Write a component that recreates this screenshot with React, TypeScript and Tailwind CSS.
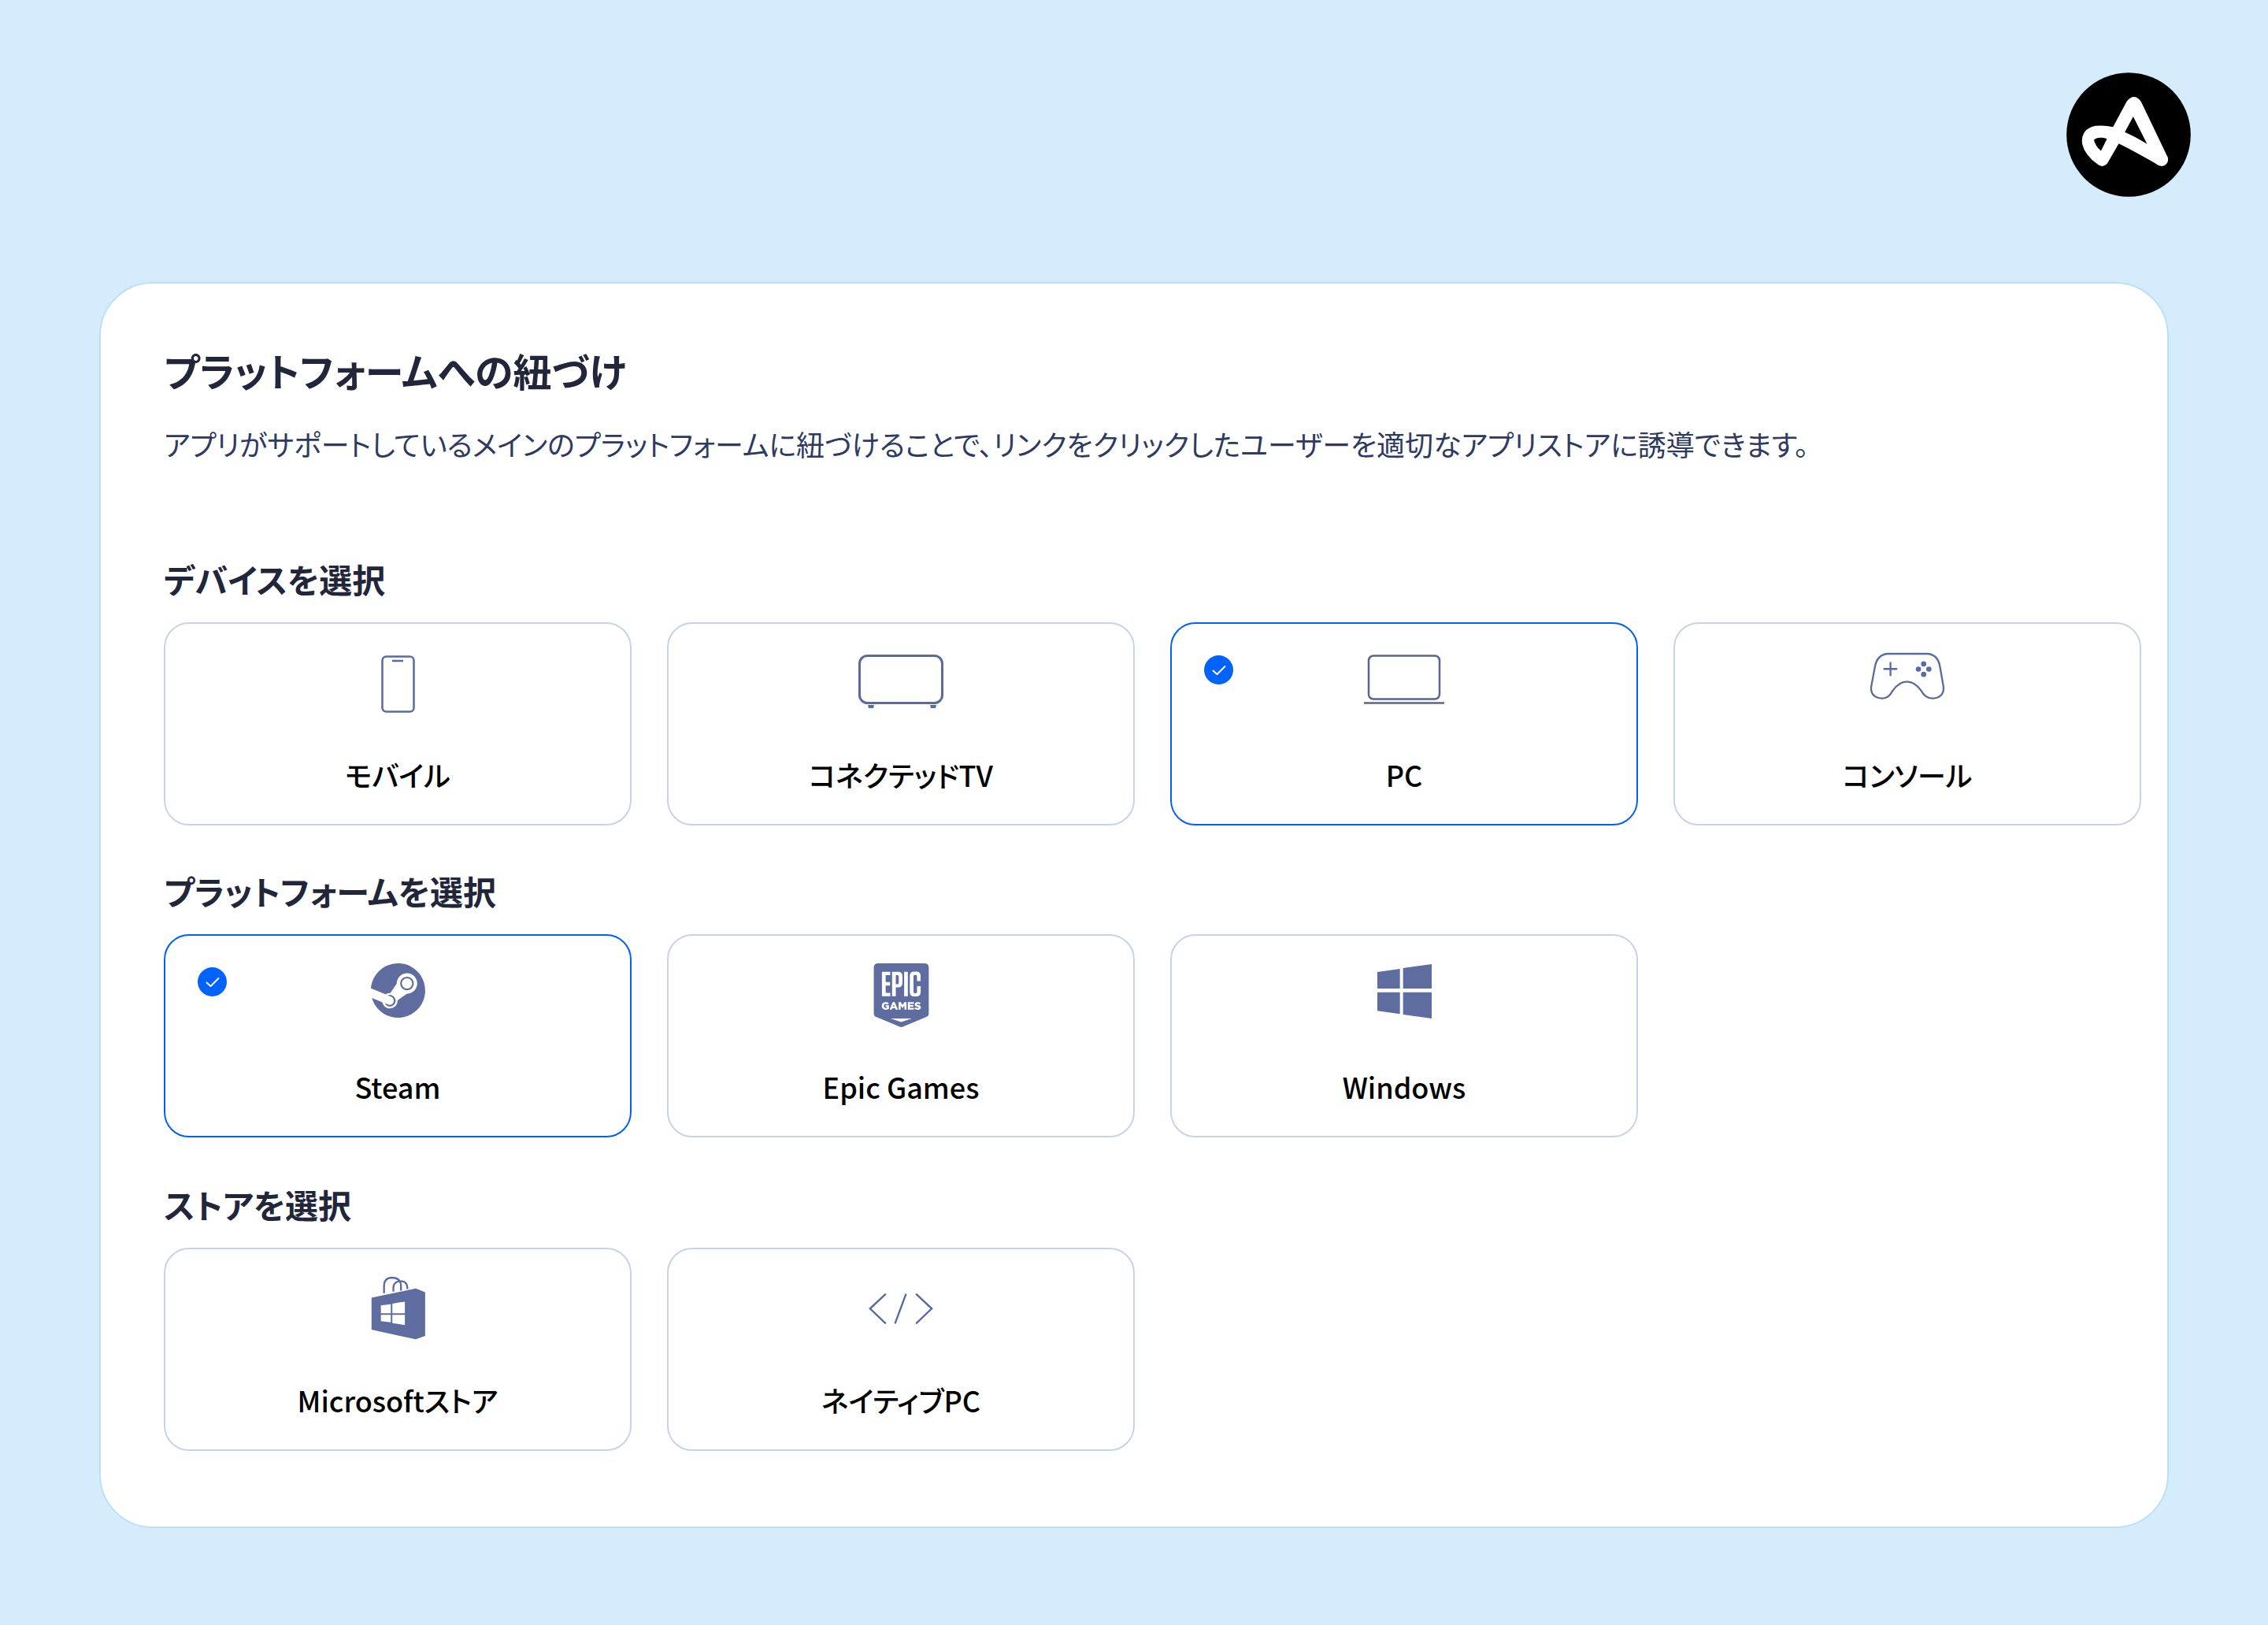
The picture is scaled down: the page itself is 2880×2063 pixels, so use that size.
import { ReactNode } from "react"
import { SiEpicgames, SiSteam } from "react-icons/si"

interface Option {
  label: string
  icon: ReactNode
  selected?: boolean
}

function AdjustLogo() {
  return (
    <svg viewBox="190 95 475 473" className="w-[158px] h-[158px]">
      <circle cx="427.5" cy="331.5" r="237" fill="#000" />
      <path
        fill="#fff"
        fillRule="evenodd"
        d="M420 205Q448 170 475 205L578 420Q582 445 555 452Q540 450 525 438Q450 395 390 365L347 440Q330 460 310 445Q260 410 250 365Q245 310 300 298Q335 294 368 302ZM445 262L498 367Q455 340 413 322ZM295 350Q315 338 345 347L322 393Q300 375 295 350Z"
      />
    </svg>
  )
}

function PhoneIcon() {
  return (
    <svg viewBox="0 0 43 73" className="mt-[40px] w-[43px] h-[73px] text-[#5a6ba3]" fill="none" stroke="currentColor">
      <rect x="1.5" y="1.5" width="40" height="70" rx="5" strokeWidth="2.5" />
      <path d="M14 7H28" strokeWidth="2.5" />
    </svg>
  )
}

function TvIcon() {
  return (
    <svg viewBox="0 0 108 68" className="mt-[39px] w-[108px] h-[68px] text-[#5a6ba3]" fill="none">
      <rect x="1.5" y="1.5" width="105" height="60" rx="10" stroke="currentColor" strokeWidth="3" />
      <path d="M12 64H20L19 68H13ZM91 64H99L98 68H92Z" fill="currentColor" />
    </svg>
  )
}

function LaptopIcon() {
  return (
    <svg viewBox="0 0 102 63" className="mt-[39px] w-[102px] h-[63px] text-[#5a6590]" fill="none" stroke="currentColor">
      <rect x="6" y="1.5" width="90" height="55" rx="6" strokeWidth="2.5" />
      <path d="M0 61.5H102" strokeWidth="2.5" />
    </svg>
  )
}

function GamepadIcon() {
  return (
    <svg viewBox="72 52 289 184" className="mt-[36px] w-[96px] h-[61px] text-[#5a6ba3]" fill="none">
      <path
        d="M140 58H295Q335 62 342 110L355 185Q358 225 315 229Q285 230 270 200Q245 165 215 165Q185 165 160 200Q145 230 120 229Q75 225 78 185L92 110Q100 62 140 58Z"
        stroke="currentColor"
        strokeWidth="7"
      />
      <path d="M125 116H178M152 90V143" stroke="currentColor" strokeWidth="7" />
      <g fill="currentColor">
        <circle cx="279" cy="97" r="10" />
        <circle cx="259" cy="117" r="10" />
        <circle cx="299" cy="117" r="10" />
        <circle cx="279" cy="137" r="10" />
      </g>
    </svg>
  )
}

function WindowsIcon() {
  return (
    <svg viewBox="145 100 207 207" className="mt-[36px] w-[69px] h-[69px]" fill="#5f6c9f">
      <polygon points="145,130 231,118 231,193 145,193" />
      <polygon points="243,115 352,100 352,193 243,193" />
      <polygon points="145,207 231,207 231,290 145,278" />
      <polygon points="243,207 352,207 352,307 243,292" />
    </svg>
  )
}

function StoreIcon() {
  return (
    <svg viewBox="150 62 208 245" className="mt-[34px] w-[69px] h-[81px]">
      <g fill="none" stroke="#5a6ba3" strokeWidth="7">
        <path d="M200 128V100Q200 70 228 68Q262 68 265 95V118" />
        <path d="M236 122V105Q238 85 258 82H270Q290 85 290 112" />
      </g>
      <polygon fill="#5f6c9f" points="152,145 322,110 358,124 358,292 322,305 152,268" />
      <g fill="#fff">
        <polygon points="188,175 226,170 226,205 188,205" />
        <polygon points="232,168 280,160 280,205 232,205" />
        <polygon points="188,211 226,211 226,240 188,235" />
        <polygon points="232,211 280,211 280,250 232,243" />
      </g>
    </svg>
  )
}

function CodeIcon() {
  return (
    <svg viewBox="130 122 245 123" className="mt-[55px] w-[82px] h-[41px] text-[#5469a0]" fill="none" stroke="currentColor" strokeWidth="7">
      <path d="M195 127L135 183L195 240M310 127L370 183L310 240M272 127L230 240" />
    </svg>
  )
}

function CheckBadge() {
  return (
    <div className="absolute left-[41px] top-[40px] w-[37px] h-[37px] rounded-full bg-[#0062ff] flex items-center justify-center">
      <svg viewBox="0 0 24 24" className="w-[24px] h-[24px]" fill="none" stroke="#fff" strokeWidth="2" strokeLinecap="round" strokeLinejoin="round">
        <path d="M4.5 12.5L9.5 17L19.5 7" />
      </svg>
    </div>
  )
}

function OptionCard({ option }: { option: Option }) {
  return (
    <div
      className={
        option.selected
          ? "relative h-[258px] rounded-[32px] bg-white border-[2.5px] border-[#0062f5] flex flex-col items-center"
          : "relative h-[258px] rounded-[32px] bg-white border-2 border-[#c8d2ea] flex flex-col items-center"
      }
    >
      {option.selected && <CheckBadge />}
      <div className="h-[164px] flex justify-center">{option.icon}</div>
      <span className="text-[36px] leading-[54px] font-medium text-black">{option.label}</span>
    </div>
  )
}

function OptionGroup({ title, options, className }: { title: string; options: Option[]; className: string }) {
  return (
    <section className={className}>
      <h2 className="text-[42px] leading-[56px] font-bold text-[#22263b] mb-[27px]">{title}</h2>
      <div className="grid grid-cols-[repeat(4,594px)] gap-x-[45px]">
        {options.map((option) => (
          <OptionCard key={option.label} option={option} />
        ))}
      </div>
    </section>
  )
}

export default function App() {
  const devices: Option[] = [
    { label: "モバイル", icon: <PhoneIcon /> },
    { label: "コネクテッドTV", icon: <TvIcon /> },
    { label: "PC", icon: <LaptopIcon />, selected: true },
    { label: "コンソール", icon: <GamepadIcon /> },
  ]
  const platforms: Option[] = [
    { label: "Steam", icon: <SiSteam className="mt-[35px] w-[69px] h-[69px] text-[#5f6c9f]" />, selected: true },
    { label: "Epic Games", icon: <SiEpicgames className="mt-[35px] w-[81px] h-[81px] text-[#5f6c9f]" /> },
    { label: "Windows", icon: <WindowsIcon /> },
  ]
  const stores: Option[] = [
    { label: "Microsoftストア", icon: <StoreIcon /> },
    { label: "ネイティブPC", icon: <CodeIcon /> },
  ]

  return (
    <div className="min-h-[2063px] bg-[#d4ecfc] pt-[92px] font-['Noto_Sans_CJK_JP','Noto_Sans',sans-serif] [font-feature-settings:'palt']">
      {/* Logo */}
      <div className="flex justify-end pr-[98px]">
        <AdjustLogo />
      </div>

      {/* Panel */}
      <div className="mt-[108px] ml-[126px] w-[2628px] h-[1582px] rounded-[68px] bg-white border-2 border-[#bcdff9] pt-[80px] pl-[80px]">
        <h1 className="text-[49px] leading-[60px] font-bold text-[#22263b]">プラットフォームへの紐づけ</h1>
        <p className="mt-[38px] text-[36px] leading-[50px] text-[#2e3a62]">
          アプリがサポートしているメインのプラットフォームに紐づけることで、リンクをクリックしたユーザーを適切なアプリストアに誘導できます。
        </p>

        <OptionGroup className="mt-[119px]" title="デバイスを選択" options={devices} />
        <OptionGroup className="mt-[55px]" title="プラットフォームを選択" options={platforms} />
        <OptionGroup className="mt-[57px]" title="ストアを選択" options={stores} />
      </div>
    </div>
  )
}
